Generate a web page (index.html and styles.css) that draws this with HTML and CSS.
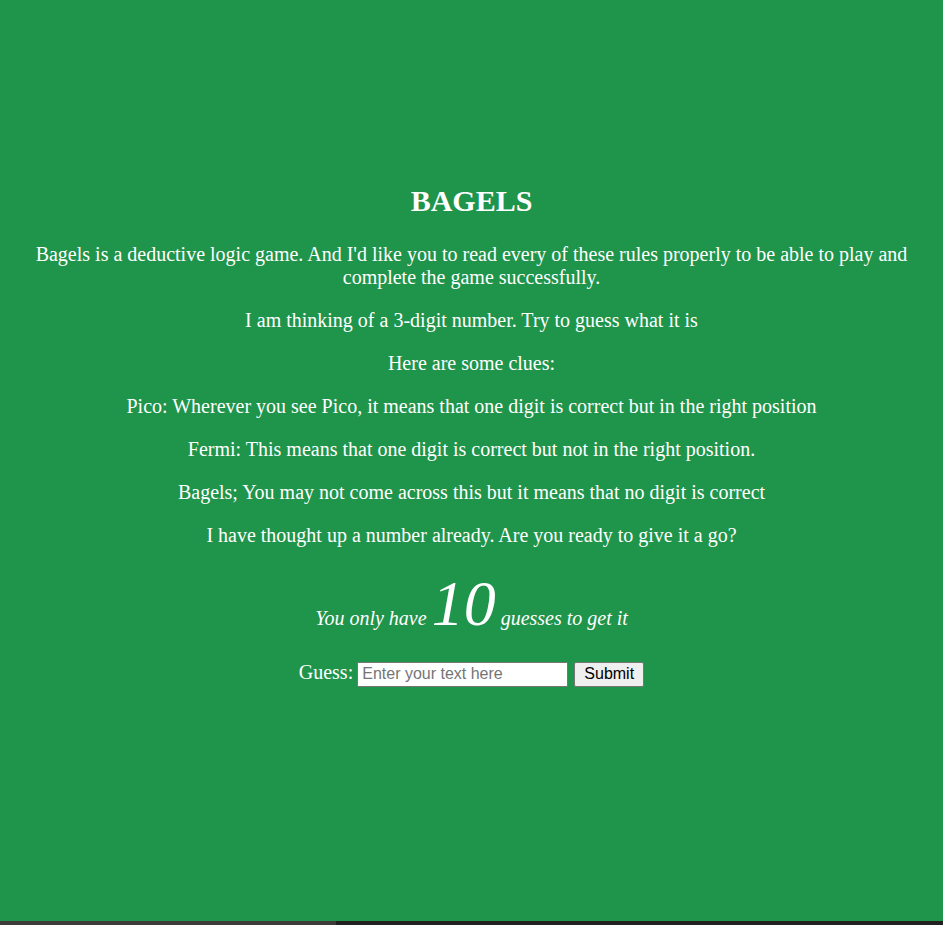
FILE: index.html
```html
<!DOCTYPE html>
<html lang="en">
<head>
<meta charset="utf-8">
<title>Bagels</title>
<link rel="stylesheet" href="styles.css">
</head>
<body>
<main class="page">
  <h1 class="title">BAGELS</h1>
  <p class="text">Bagels is a deductive logic game. And I'd like you to read every of these rules properly to be able to play and complete the game successfully.</p>
  <p class="text">I am thinking of a 3-digit number. Try to guess what it is</p>
  <p class="text">Here are some clues:</p>
  <p class="text">Pico: Wherever you see Pico, it means that one digit is correct but in the right position</p>
  <p class="text">Fermi: This means that one digit is correct but not in the right position.</p>
  <p class="text">Bagels; You may not come across this but it means that no digit is correct</p>
  <p class="text">I have thought up a number already. Are you ready to give it a go?</p>
  <p class="text note">You only have <span class="big">10</span> guesses to get it</p>
  <form class="text guess-form" onsubmit="return false;">
    <label for="guess">Guess:</label><input id="guess" class="guess-input" type="text" placeholder="Enter your text here"><button class="submit" type="submit">Submit</button>
  </form>
</main>
<div class="strip"><div class="strip-thumb"></div></div>
</body>
</html>
```
FILE: styles.css
```css
html, body {
  margin: 0;
  padding: 0;
}
body {
  background: #1f944b;
  color: #ffffff;
  font-family: "Liberation Serif", "Times New Roman", serif;
  overflow: hidden;
}
.page {
  box-sizing: border-box;
  height: 921px;
  padding: 164px 8px 0;
  text-align: center;
}
.title {
  font-size: 30px;
  font-weight: bold;
  margin: 20px 0 25px;
}
.text {
  font-size: 20px;
  margin: 20px 0;
}
.note {
  font-style: italic;
}
.big {
  font-size: 64px;
}
.guess-input {
  box-sizing: border-box;
  width: 211px;
  height: 25px;
  padding: 1px 4px;
  border: 1px solid #767676;
  background: #ffffff;
  font-family: "Liberation Sans", Arial, sans-serif;
  font-size: 16px;
  color: #000;
  margin: 0 6px 0 4px;
}
.guess-input::placeholder {
  color: #757575;
}
.submit {
  box-sizing: border-box;
  width: 70px;
  height: 25px;
  padding: 1px 6px;
  border: 1px solid #767676;
  border-radius: 2px;
  background: #efefef;
  font-family: "Liberation Sans", Arial, sans-serif;
  font-size: 16px;
  color: #000;
  margin: 0;
}
.strip {
  height: 4px;
  background: #202020;
}
.strip-thumb {
  width: 336px;
  height: 4px;
  background: #403b3b;
}
```
